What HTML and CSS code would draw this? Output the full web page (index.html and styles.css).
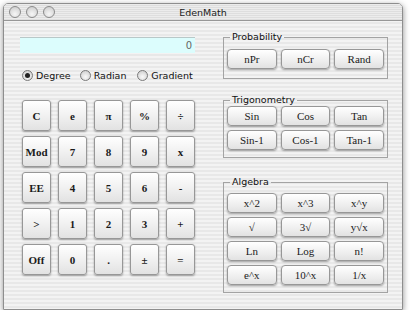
FILE: index.html
```html
<!DOCTYPE html>
<html lang="en">
<head>
  <meta charset="UTF-8" />
  <title>EdenMath</title>
  <link rel="stylesheet" href="styles.css">
</head>
<body>
  <div class="window">
    <div class="titlebar">
      <div class="lights">
        <span class="light"></span>
        <span class="light"></span>
        <span class="light"></span>
      </div>
      <div class="title">EdenMath</div>
      <div></div>
    </div>

    <div class="content">
      <div class="left">
        <div class="display">0</div>

        <div class="modes">
          <label class="mode"><span class="radio on"></span>Degree</label>
          <label class="mode"><span class="radio"></span>Radian</label>
          <label class="mode"><span class="radio"></span>Gradient</label>
        </div>

        <div class="keypad">
          <button class="key">C</button>
          <button class="key">e</button>
          <button class="key">π</button>
          <button class="key">%</button>
          <button class="key">÷</button>
          <button class="key">Mod</button>
          <button class="key">7</button>
          <button class="key">8</button>
          <button class="key">9</button>
          <button class="key">x</button>
          <button class="key">EE</button>
          <button class="key">4</button>
          <button class="key">5</button>
          <button class="key">6</button>
          <button class="key">-</button>
          <button class="key">&gt;</button>
          <button class="key">1</button>
          <button class="key">2</button>
          <button class="key">3</button>
          <button class="key">+</button>
          <button class="key">Off</button>
          <button class="key">0</button>
          <button class="key">.</button>
          <button class="key">±</button>
          <button class="key">=</button>
        </div>
      </div>

      <div class="right">
        <fieldset class="group prob">
          <legend>Probability</legend>
          <div class="fn-grid">
            <button class="fn">nPr</button>
            <button class="fn">nCr</button>
            <button class="fn">Rand</button>
          </div>
        </fieldset>

        <fieldset class="group trig">
          <legend>Trigonometry</legend>
          <div class="fn-grid">
            <button class="fn">Sin</button>
            <button class="fn">Cos</button>
            <button class="fn">Tan</button>
            <button class="fn">Sin-1</button>
            <button class="fn">Cos-1</button>
            <button class="fn">Tan-1</button>
          </div>
        </fieldset>

        <fieldset class="group alg">
          <legend>Algebra</legend>
          <div class="fn-grid">
            <button class="fn">x^2</button>
            <button class="fn">x^3</button>
            <button class="fn">x^y</button>
            <button class="fn">√</button>
            <button class="fn">3√</button>
            <button class="fn">y√x</button>
            <button class="fn">Ln</button>
            <button class="fn">Log</button>
            <button class="fn">n!</button>
            <button class="fn">e^x</button>
            <button class="fn">10^x</button>
            <button class="fn">1/x</button>
          </div>
        </fieldset>
      </div>
    </div>
  </div>
</body>
</html>
```

FILE: styles.css
```css
body {
  margin: 0;
  background: #fff;
  font-family: 'DejaVu Sans', sans-serif;
  font-size: 9.5px;
  color: #111;
}
.window {
  margin: 3px 0 0 3px;
  width: 400px;
  height: 307px;
  box-sizing: border-box;
  border: 1px solid #8e8e8e;
  border-radius: 5px 5px 0 0;
  overflow: hidden;
  background: repeating-linear-gradient(to bottom, #f3f3f3 0 2px, #e8e8e8 2px 4px);
  box-shadow: 0 2px 6px rgba(0,0,0,0.45);
}
.titlebar {
  height: 16px;
  display: grid;
  grid-template-columns: 1fr auto 1fr;
  align-items: center;
  border-bottom: 1px solid #979797;
  background: repeating-linear-gradient(to bottom, #ececec 0 1px, #dedede 1px 2px);
}
.lights {
  display: flex;
  gap: 5px;
  padding-left: 5px;
}
.light {
  width: 10px;
  height: 10px;
  border-radius: 50%;
  border: 1px solid #8a8a8a;
  background: radial-gradient(circle at 50% 70%, #f6f6f6, #c9c9c9);
}
.title {
  font-size: 9.5px;
  color: #222;
}
.content {
  display: flex;
  gap: 28px;
  padding: 0 14px 0 16px;
}
.left {
  width: 175px;
  margin-top: 16px;
}
.display {
  height: 16px;
  box-sizing: border-box;
  background: #dcfdfd;
  border-top: 1px solid #b8c8c8;
  color: #666;
  text-align: right;
  padding: 1px 3px 0 0;
  line-height: 14px;
  font-size: 10px;
}
.modes {
  display: flex;
  margin-top: 16px;
  padding-left: 2px;
  height: 12px;
}
.mode {
  width: 60px;
  display: flex;
  align-items: center;
  gap: 3px;
  white-space: nowrap;
}
.radio {
  width: 11px;
  height: 11px;
  box-sizing: border-box;
  border-radius: 50%;
  border: 1px solid #7a7a7a;
  background: radial-gradient(circle at 50% 65%, #fafafa, #c8c8c8);
  display: flex;
  align-items: center;
  justify-content: center;
}
.radio.on::after {
  content: "";
  width: 5px;
  height: 5px;
  border-radius: 50%;
  background: #222;
}
.keypad {
  margin: 19px 0 0 2px;
  display: grid;
  grid-template-columns: repeat(5, 29px);
  grid-auto-rows: 31px;
  column-gap: 7px;
  row-gap: 5px;
}
.key, .fn {
  margin: 0;
  padding: 0;
  border: 1px solid #979797;
  background: linear-gradient(to bottom, #ffffff, #f1f1f1 50%, #e2e2e2);
  box-shadow: 0 1px 2px rgba(0,0,0,0.35);
  font-family: 'Liberation Serif', serif;
  color: #1a1a1a;
  display: flex;
  align-items: center;
  justify-content: center;
}
.key {
  border-radius: 3px;
  font-size: 11px;
  font-weight: bold;
}
.right {
  width: 165px;
  padding-top: 10px;
}
.group {
  margin: 0;
  border: 1px solid #a3a3a3;
  padding: 0 3px;
}
.group legend {
  margin-left: 3px;
  padding: 0 2px;
  line-height: 12px;
  font-size: 9.5px;
}
.prob {
  padding-top: 6px;
  padding-bottom: 9px;
}
.trig {
  margin-top: 15px;
  padding-top: 0;
  padding-bottom: 7px;
}
.alg {
  margin-top: 18px;
  padding-top: 5px;
  padding-bottom: 7px;
}
.fn-grid {
  display: grid;
  grid-template-columns: repeat(3, 1fr);
  grid-auto-rows: 20px;
  gap: 4px;
}
.fn {
  border-radius: 4px;
  font-size: 11px;
}
```
